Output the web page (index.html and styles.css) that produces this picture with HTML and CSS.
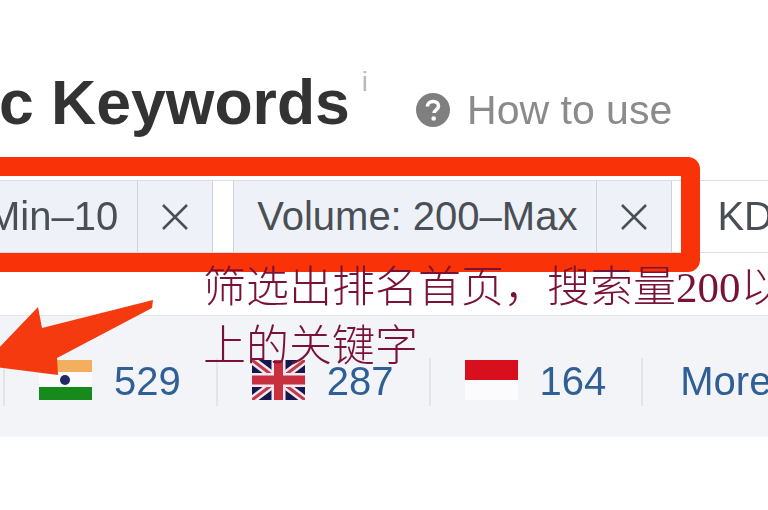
FILE: index.html
```html
<!DOCTYPE html>
<html lang="zh">
<head>
<meta charset="utf-8">
<title>Organic Keywords</title>
<link rel="stylesheet" href="styles.css">
</head>
<body>
<main class="page">
  <header class="title-row">
    <h1 class="title">c Keywords</h1>
    <sup class="info">i</sup>
    <a class="how">
      <svg class="how-icon" viewBox="0 0 34 34"><circle cx="17" cy="17" r="17" fill="#7f7f7f"/><path d="M11.5 13.5c0-3.2 2.4-5 5.6-5 3.100 0 5.400 1.800 5.400 4.600 0 3.700-4.400 3.900-4.400 7" fill="none" stroke="#fff" stroke-width="3.600"/><circle cx="17.700" cy="25.500" r="2.300" fill="#fff"/></svg>
      <span>How to use</span>
    </a>
  </header>

  <section class="filters">
    <div class="chip"><span class="chip-label chip-first">Min–10</span><span class="chip-x"><svg viewBox="0 0 26 26"><path d="M1 1l24 24M25 1L1 25"/></svg></span></div>
    <div class="chip"><span class="chip-label">Volume: 200–Max</span><span class="chip-x"><svg viewBox="0 0 26 26"><path d="M1 1l24 24M25 1L1 25"/></svg></span></div>
    <span class="filter-next">KD</span>
  </section>

  <section class="stats">
    <div class="stat">
      <svg class="flag" viewBox="0 0 53 40"><rect width="53" height="12" fill="#f2b05e"/><rect y="12" width="53" height="15" fill="#fbfbfb"/><rect y="27" width="53" height="13" fill="#178a1c"/><circle cx="26" cy="20" r="5" fill="#1f2a66"/></svg>
      <a class="num">529</a>
    </div>
    <div class="stat">
      <svg class="flag" viewBox="0 0 53 40"><rect width="53" height="40" fill="#15174f"/><path d="M0 0l53 40M53 0L0 40" stroke="#f2e8ee" stroke-width="8"/><path d="M0 0l53 40M53 0L0 40" stroke="#c23a4c" stroke-width="3"/><path d="M26.500 0v40M0 20h53" stroke="#f2e8ee" stroke-width="14"/><path d="M26.500 0v40M0 20h53" stroke="#c8303f" stroke-width="9"/></svg>
      <a class="num">287</a>
    </div>
    <div class="stat">
      <svg class="flag" viewBox="0 0 53 40"><rect width="53" height="20" fill="#d80f1c"/><rect y="20" width="53" height="20" fill="#fbfbfd"/></svg>
      <a class="num">164</a>
    </div>
    <div class="stat stat-more"><a class="num">More</a></div>
  </section>
</main>

<div class="red-box"></div>
<svg class="arrow" viewBox="0 0 160 90"><polygon points="153,2 42,30 38,9 -5,54 -5,69 58,77 57,60 152,10"/></svg>
<p class="note">筛选出排名首页，搜索量<span class="digits">200</span>以<br>上的关键字</p>
</body>
</html>
```

FILE: styles.css
```css
* { box-sizing: border-box; }
html, body { margin: 0; padding: 0; }
body {
  width: 768px;
  height: 510px;
  overflow: hidden;
  background: #fff;
  position: relative;
  font-family: "Liberation Sans", Arial, sans-serif;
}
.page { filter: blur(0.6px); }

.title-row {
  display: flex;
  align-items: center;
  height: 180px;
  padding-top: 40px;
}
.title {
  margin: 0 0 16px -1px;
  font-size: 62.500px;
  font-weight: 700;
  line-height: 70px;
  color: #333;
  white-space: nowrap;
}
.info {
  align-self: flex-start;
  margin: 28px 0 0 12px;
  font-size: 28px;
  line-height: 28px;
  color: #b9b9b9;
}
.how {
  display: flex;
  align-items: center;
  gap: 17px;
  margin-left: 48px;
  font-size: 41px;
  color: #8b8b8b;
}
.how-icon { width: 34px; height: 34px; }

.filters {
  display: flex;
  align-items: stretch;
  height: 73px;
  border-top: 1px solid #ddd;
  border-bottom: 1px solid #ddd;
  font-size: 40px;
  color: #4a4f55;
  white-space: nowrap;
}
.chip {
  display: flex;
  background: #eef2f8;
  border-left: 1px solid #ccd3dc;
  border-right: 1px solid #ccd3dc;
  margin-right: 20px;
}
.chip:first-child { margin-left: -37px; }
.chip-label { display: flex; align-items: center; padding: 0 19px 0 23px; }
.chip-x {
  display: flex;
  align-items: center;
  justify-content: center;
  width: 75px;
  border-left: 1px solid #ccd3dc;
}
.chip-x svg { width: 26px; height: 26px; fill: none; stroke: #4a4f55; stroke-width: 2.500; }
.filter-next { display: flex; align-items: center; margin-left: 25px; }

.stats {
  display: flex;
  align-items: center;
  height: 122px;
  margin-top: 62px;
  padding: 10px 0 0 3px;
  background: #f3f4f7;
  border-top: 1px solid #e6e7ea;
  white-space: nowrap;
}
.stat {
  display: flex;
  align-items: center;
  gap: 22px;
  height: 48px;
  padding: 0 35px 0 34px;
  border-left: 2px solid #e4e5e9;
}
.stat-more { padding-left: 37px; }
.flag { width: 53px; height: 40px; display: block; margin-top: -4px; }
.num { font-size: 40px; color: #2f5f94; }

.red-box {
  position: absolute;
  left: -30px;
  top: 157px;
  width: 730px;
  height: 115px;
  border: 19px solid #f93208;
  border-radius: 12px;
}
.arrow {
  position: absolute;
  left: 0;
  top: 298px;
  width: 160px;
  height: 90px;
  overflow: visible;
  fill: #f53a10;
}
.note {
  position: absolute;
  left: 203px;
  top: 256px;
  margin: 0;
  white-space: nowrap;
  font-family: "Noto Sans CJK SC", sans-serif;
  font-size: 43px;
  font-weight: 300;
  line-height: 54px;
  color: #7a1238;
}
.digits { font-family: "Liberation Serif", serif; }
```
